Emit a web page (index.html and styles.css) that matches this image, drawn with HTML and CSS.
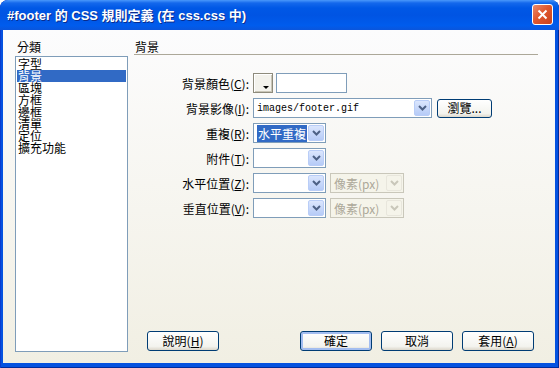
FILE: index.html
```html
<!DOCTYPE html>
<html lang="zh-Hant">
<head>
    <meta charset="UTF-8">
    <title>#footer 的 CSS 規則定義</title>
    <link rel="stylesheet" href="styles.css">
</head>
<body>
    <div class="window">
        <div class="titlebar">
            <span class="title">#footer 的 CSS 規則定義 (在 css.css 中)</span>
            <span class="close">
                <svg width="11" height="11" viewBox="0 0 11 11"><path d="M1.5 1.5 L9.5 9.5 M9.5 1.5 L1.5 9.5" stroke="#fff" stroke-width="2"/></svg>
            </span>
        </div>
        <div class="client">
            <div class="category">
                <div class="caption">分類</div>
                <ul class="list">
                    <li>字型</li>
                    <li class="selected">背景</li>
                    <li>區塊</li>
                    <li>方框</li>
                    <li>邊框</li>
                    <li>清單</li>
                    <li>定位</li>
                    <li>擴充功能</li>
                </ul>
            </div>
            <div class="panel">
                <div class="panel-title">背景</div>
                <div class="fields">
                    <label>背景顏色(<u>C</u>):</label>
                    <div class="controls">
                        <span class="swatch"><i></i></span>
                        <span class="textbox"></span>
                    </div>

                    <label>背景影像(<u>I</u>):</label>
                    <div class="controls">
                        <span class="select wide"><span class="value mono">images/footer.gif</span><span class="arrow"><svg width="9" height="6" viewBox="0 0 9 6"><path d="M1 1 L4.5 4.5 L8 1" fill="none" stroke="#4d6185" stroke-width="2"/></svg></span></span>
                        <span class="button browse">瀏覽...</span>
                    </div>

                    <label>重複(<u>R</u>):</label>
                    <div class="controls">
                        <span class="select"><span class="value"><span class="hl">水平重複</span></span><span class="arrow"><svg width="9" height="6" viewBox="0 0 9 6"><path d="M1 1 L4.5 4.5 L8 1" fill="none" stroke="#4d6185" stroke-width="2"/></svg></span></span>
                    </div>

                    <label>附件(<u>T</u>):</label>
                    <div class="controls">
                        <span class="select"><span class="value"></span><span class="arrow"><svg width="9" height="6" viewBox="0 0 9 6"><path d="M1 1 L4.5 4.5 L8 1" fill="none" stroke="#4d6185" stroke-width="2"/></svg></span></span>
                    </div>

                    <label>水平位置(<u>Z</u>):</label>
                    <div class="controls">
                        <span class="select"><span class="value"></span><span class="arrow"><svg width="9" height="6" viewBox="0 0 9 6"><path d="M1 1 L4.5 4.5 L8 1" fill="none" stroke="#4d6185" stroke-width="2"/></svg></span></span>
                        <span class="select disabled"><span class="value">像素(px)</span><span class="arrow"><svg width="9" height="6" viewBox="0 0 9 6"><path d="M1 1 L4.5 4.5 L8 1" fill="none" stroke="#c9c7ba" stroke-width="2"/></svg></span></span>
                    </div>

                    <label>垂直位置(<u>V</u>):</label>
                    <div class="controls">
                        <span class="select"><span class="value"></span><span class="arrow"><svg width="9" height="6" viewBox="0 0 9 6"><path d="M1 1 L4.5 4.5 L8 1" fill="none" stroke="#4d6185" stroke-width="2"/></svg></span></span>
                        <span class="select disabled"><span class="value">像素(px)</span><span class="arrow"><svg width="9" height="6" viewBox="0 0 9 6"><path d="M1 1 L4.5 4.5 L8 1" fill="none" stroke="#c9c7ba" stroke-width="2"/></svg></span></span>
                    </div>
                </div>

                <div class="actions">
                    <span class="button">說明(<u>H</u>)</span>
                    <span class="spacer"></span>
                    <span class="button default">確定</span>
                    <span class="button">取消</span>
                    <span class="button">套用(<u>A</u>)</span>
                </div>
            </div>
        </div>
    </div>
</body>
</html>
```

FILE: styles.css
```css
body {
    margin: 0;
    font-family: "Noto Sans CJK TC", "Liberation Sans", sans-serif;
    font-size: 12px;
    color: #000;
    background: #fff;
}

.window {
    width: 559px;
    height: 368px;
    box-sizing: border-box;
    padding: 0 4px 5px 3px;
    display: flex;
    flex-direction: column;
    background: #0552e0;
    border-radius: 8px 8px 0 0;
    box-shadow: inset 1px 0 0 #0a3ccf, inset -1px -1px 0 #002b9c;
    overflow: hidden;
}

.titlebar {
    height: 30px;
    margin: 0 -4px 0 -3px;
    padding: 0 6px 0 7px;
    display: flex;
    align-items: center;
    justify-content: space-between;
    background: linear-gradient(#4a98fb 0, #1468ec 3px, #0058e6 8px, #0054e3 50%, #005ced 85%, #0a55dc 100%);
    border-radius: 8px 8px 0 0;
}

.title {
    color: #fff;
    font-family: "Liberation Sans", "Noto Sans CJK TC", sans-serif;
    font-weight: bold;
    font-size: 13px;
    text-shadow: 1px 1px 0 #0a2c8c;
    margin-top: -2px;
}

.close {
    width: 21px;
    height: 21px;
    box-sizing: border-box;
    margin-top: -2px;
    border: 1px solid #fff;
    border-radius: 3px;
    background: linear-gradient(135deg, #e98b6e 0, #e0582f 45%, #c8421d 100%);
    display: flex;
    align-items: center;
    justify-content: center;
}

.close svg {
    display: block;
}

.client {
    flex: 1;
    display: flex;
    gap: 6px;
    padding: 11px 17px 11px 12px;
    background: linear-gradient(#fcfcfd, #f1efe3);
}

.category {
    width: 113px;
    display: flex;
    flex-direction: column;
}

.caption {
    height: 15px;
    line-height: 12px;
    padding-left: 2px;
}

.list {
    flex: 1;
    margin: 0;
    padding: 1px;
    list-style: none;
    background: #fff;
    border: 1px solid #7f9db9;
}

.list li {
    height: 12px;
    line-height: 12px;
    padding-left: 1px;
}

.list li.selected {
    background: #316ac5;
    color: #fff;
}

.panel {
    flex: 1;
    display: flex;
    flex-direction: column;
}

.panel-title {
    height: 13px;
    line-height: 12px;
    padding-left: 1px;
    border-bottom: 1px solid #aca899;
}

.fields {
    margin-top: 18px;
    display: grid;
    grid-template-columns: 115px auto;
    column-gap: 4px;
    row-gap: 5px;
    align-items: center;
}

.fields label {
    text-align: right;
    white-space: nowrap;
}

.controls {
    display: flex;
    align-items: center;
    gap: 4px;
    height: 20px;
}

.swatch {
    width: 20px;
    height: 20px;
    box-sizing: border-box;
    border: 1px solid #8e8b7c;
    box-shadow: inset 1px 1px 0 #fff, inset -1px -1px 0 #c9c6b8;
    background: #f3f2ec;
    position: relative;
}

.swatch i {
    position: absolute;
    right: 3px;
    bottom: 3px;
    border-left: 3px solid transparent;
    border-right: 3px solid transparent;
    border-top: 3px solid #000;
}

.textbox {
    width: 71px;
    height: 20px;
    box-sizing: border-box;
    margin-left: -1px;
    border: 1px solid #7f9db9;
    background: #fff;
}

.select {
    width: 73px;
    height: 20px;
    box-sizing: border-box;
    border: 1px solid #7f9db9;
    background: #fff;
    display: flex;
    align-items: center;
    padding: 1px;
}

.select.wide {
    width: 179px;
}

.select .value {
    flex: 1;
    padding-left: 2px;
    white-space: nowrap;
    overflow: hidden;
}

.mono {
    font-family: "Liberation Mono", monospace;
    font-size: 10px;
    padding-top: 1px;
}

.hl {
    background: #316ac5;
    color: #fff;
    padding: 0 1px;
}

.arrow {
    width: 16px;
    height: 16px;
    box-sizing: border-box;
    border: 1px solid #b9cdf7;
    border-radius: 2px;
    background: linear-gradient(#dbe6fd, #b6cbf7);
    display: flex;
    align-items: center;
    justify-content: center;
}

.arrow svg {
    display: block;
}

.select.disabled {
    width: 74px;
    border-color: #c9c7ba;
    background: #f5f4ea;
    color: #aca899;
}

.select.disabled .arrow {
    border-color: #e8e6dc;
    background: #f5f4ea;
}

.button {
    width: 72px;
    height: 20px;
    box-sizing: border-box;
    border: 1px solid #003c74;
    border-radius: 3px;
    background: linear-gradient(#ffffff, #f3f3ee 80%, #dcd7cb);
    display: flex;
    align-items: center;
    justify-content: center;
    line-height: 12px;
}

.button.browse {
    width: 55px;
    height: 19px;
    margin-left: 1px;
}

.button.default {
    box-shadow: inset 0 0 0 2px #a3bdf0;
}

.actions {
    margin-top: auto;
    margin-bottom: 1px;
    padding: 0 4px 0 13px;
    display: flex;
    gap: 9px;
}

.spacer {
    flex: 1;
}
```
